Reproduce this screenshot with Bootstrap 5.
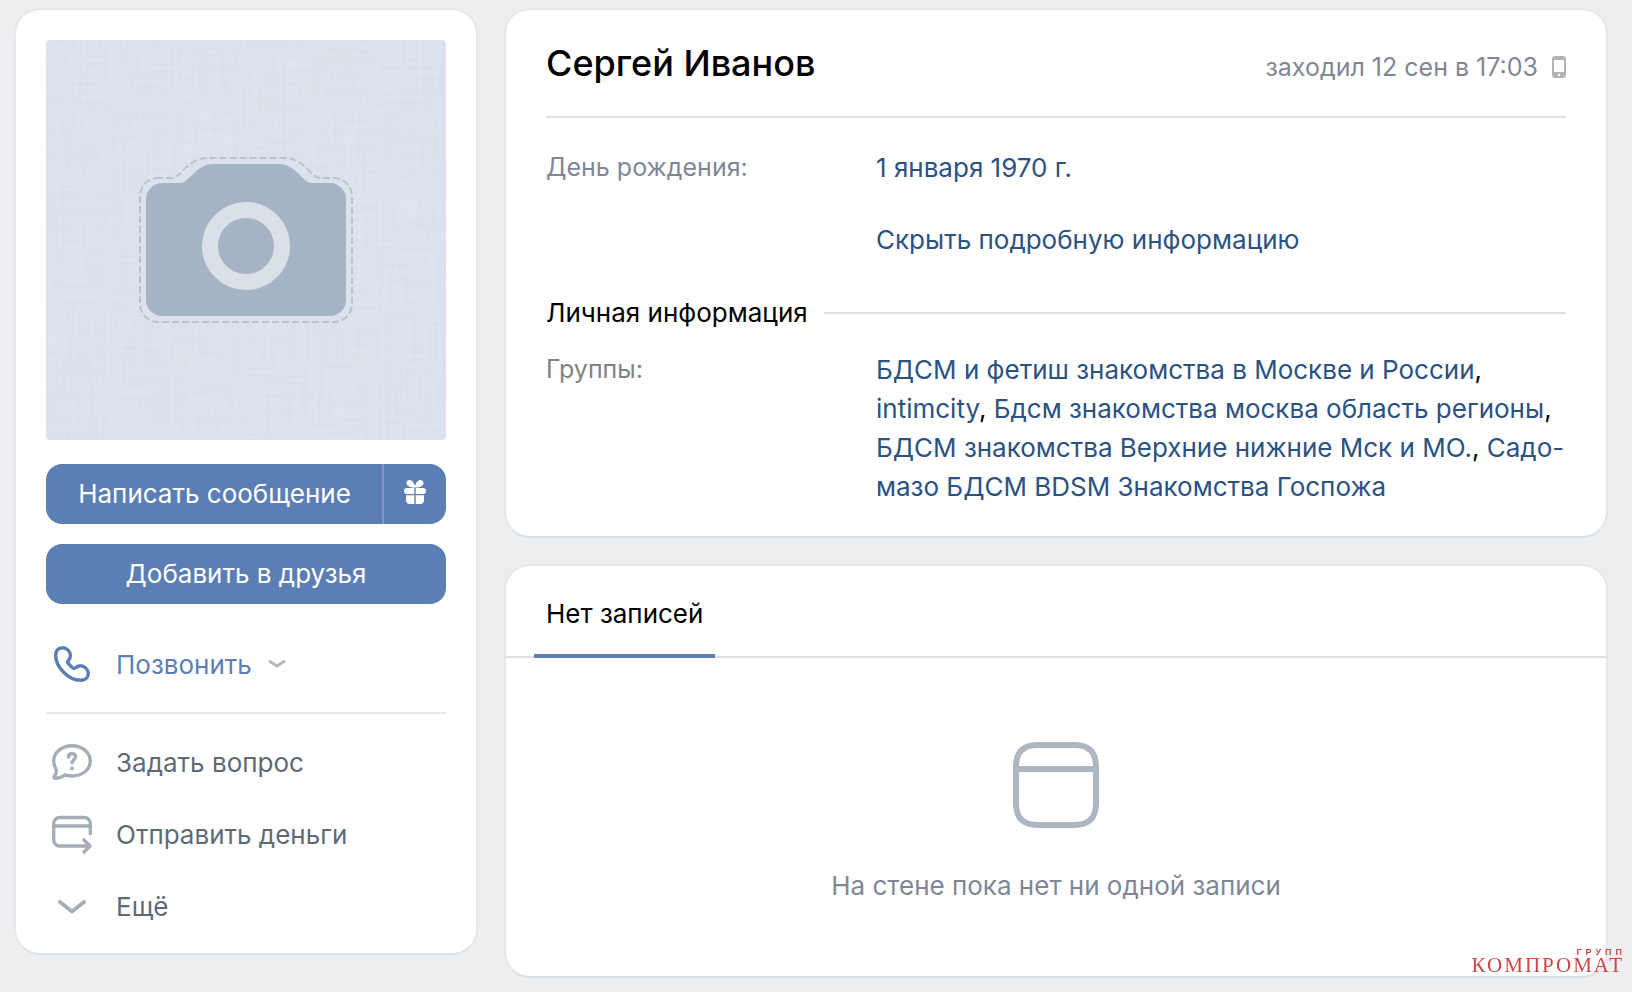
<!DOCTYPE html>
<html lang="ru">
<head>
<meta charset="utf-8">
<meta name="viewport" content="width=device-width, initial-scale=1">
<title>Сергей Иванов</title>
<link href="https://cdn.jsdelivr.net/npm/bootstrap@5.3.0/dist/css/bootstrap.min.css" rel="stylesheet">
<style>
  :root { --accent: #5b7fb4; --line: #dce1e6; --muted: #7f8796; --ink-link: #2c5282; }
  body { background: #edeef0; color: #000; font-family: Inter, "Liberation Sans", sans-serif; font-size: 26px; line-height: 39px; }
  a { color: var(--ink-link); text-decoration: none; }
  .page { padding: 8px 24px 12px 14px; gap: 26px; }
  .side { width: 464px; }
  .panel { border: 2px solid #e5e7eb; border-bottom-color: var(--line); border-radius: 26px; background: #fff; }
  .side .panel { padding: 30px 30px 11px; }
  .avatar { border-radius: 4px; display: block; width: 100%; height: auto; }
  .action { --bs-btn-color: #fff; --bs-btn-bg: var(--accent); --bs-btn-hover-color: #fff; --bs-btn-hover-bg: #5275a8; --bs-btn-border-width: 0px;
    --bs-btn-font-size: 26px; --bs-btn-line-height: 40px; --bs-btn-padding-y: 10px; --bs-btn-padding-x: 0px; --bs-btn-border-radius: 16px; }
  .btn-group > .gift { flex: 0 0 64px; border-left: 2px solid #7d99c3; }
  .friend { margin-top: 20px; }
  .menu-row { height: 72px; padding-left: 6px; gap: 24px; color: #5f6a77; }
  .menu-row svg { flex: none; color: #a6adb8; }
  .menu-call, .menu-row .glyph { color: var(--accent); }
  .menu-call { gap: 16px; }
  .menu-call .glyph { margin-right: 8px; }
  .rule { height: 2px; background: var(--line); }
  .side .rule { background: #e7e8ec; margin: 12px 0; }
  .info { padding: 0 40px 30px; }
  .head { height: 106px; }
  .name { font-size: 36px; line-height: 46px; font-weight: 500; }
  .soft { color: var(--muted); }
  .seen { font-size: 25px; gap: 14px; }
  .facts { margin: 30px 0 0; }
  .facts dt, .facts .blank { width: 330px; flex: none; font-size: 25px; font-weight: 400; }
  .more { margin-top: 33px; }
  .subhead { margin-top: 34px; }
  .subhead h2 { font-size: 26px; line-height: 39px; font-weight: 400; }
  .groups { margin-top: 18px; }
  .groups dt { color: #828282; }
  .tab { margin-left: 28px; margin-bottom: -2px; padding: 28px 12px 21px; border-bottom: 4px solid var(--accent); color: #000; }
  .tabs { border-bottom: 2px solid var(--line); }
  .empty { padding: 84px 0 71px; gap: 38px; }
  .brand { position: fixed; right: 10px; bottom: 17px; color: #cf4647; }
  .brand-top { font: 700 9px/8px "Liberation Sans", sans-serif; letter-spacing: 4px; margin-right: -4px; }
  .brand-name { font: 21px/19px "Liberation Serif", serif; letter-spacing: 2px; margin-right: -2px; }
</style>
</head>
<body>
<div class="page d-flex align-items-start">
  <aside class="side flex-shrink-0">
    <div class="panel">
      <svg class="avatar" viewBox="0 0 400 400" role="img" aria-label="Нет фотографии">
        <defs>
          <filter id="weft" x="0" y="0" width="100%" height="100%"><feTurbulence type="fractalNoise" baseFrequency="0.015 0.3" numOctaves="2" seed="4"/><feColorMatrix values="0 0 0 0 .62  0 0 0 0 .66  0 0 0 0 .72  2.4 0 0 0 -.9"/></filter>
          <filter id="warp" x="0" y="0" width="100%" height="100%"><feTurbulence type="fractalNoise" baseFrequency="0.3 0.015" numOctaves="2" seed="9"/><feColorMatrix values="0 0 0 0 .62  0 0 0 0 .66  0 0 0 0 .72  2.4 0 0 0 -.9"/></filter>
        </defs>
        <rect width="400" height="400" fill="#dee5ee"/>
        <rect width="400" height="400" filter="url(#weft)" opacity=".2"/>
        <rect width="400" height="400" filter="url(#warp)" opacity=".2"/>
        <path d="M110 138h16c9 0 15-20 36-20h76c21 0 27 20 36 20h14a18 18 0 0 1 18 18v108a18 18 0 0 1-18 18H112a18 18 0 0 1-18-18V156a18 18 0 0 1 18-18z" fill="#dbe2eb" stroke="#b9c3cf" stroke-width="2" stroke-dasharray="7 3"/>
        <path d="M116 143h18c10 0 15-19 34-19h64c19 0 24 19 34 19h18a16 16 0 0 1 16 16v101a16 16 0 0 1-16 16H116a16 16 0 0 1-16-16V159a16 16 0 0 1 16-16z" fill="#a5b3c4"/>
        <circle cx="200" cy="206" r="36" fill="none" stroke="#dae0e7" stroke-width="16"/>
      </svg>
      <div class="btn-group d-flex mt-4">
        <button type="button" class="btn action">Написать сообщение</button>
        <button type="button" class="btn action gift" aria-label="Отправить подарок">
          <svg width="24" height="26" viewBox="0 0 24 26" fill="#fff" class="d-block mx-auto mb-1"><path d="M11 8.500C6.500 8.500 3.500 6.500 3.500 4 3.500 2.200 4.800 1 6.600 1 9 1 11 3.500 11.700 6.500h.6C13 3.500 15 1 17.400 1c1.800 0 3.100 1.200 3.100 3 0 2.500-3 4.500-7.500 4.500z"/><path d="M4 9h7.300v6H4a3 3 0 0 1 0-6zm8.700 0H20a3 3 0 0 1 0 6h-7.300zM3 16.300h8.300V25H7a4 4 0 0 1-4-4zm9.700 0H21V21a4 4 0 0 1-4 4h-4.300z"/></svg>
        </button>
      </div>
      <button type="button" class="btn action friend w-100 d-block">Добавить в друзья</button>
      <nav class="pt-4">
        <a href="#" class="menu-row menu-call d-flex align-items-center">
          <svg class="glyph" width="40" height="40" viewBox="0 0 40 40" fill="none" stroke="currentColor" stroke-width="3.400"><path d="M10.500 3.700C6 3.700 3.700 7 3.700 11.500 3.700 23 16.500 36.300 28.500 36.300c4.500 0 7.800-2.800 7.800-6.800s-3.800-7.700-7.800-7.700c-2.500 0-3.500.8-4.800 2-1.200 1-2.200 1-3.400-.2l-3.800-3.800c-1.200-1.200-1-2.200 0-3.400 1.200-1.400 1.900-2.600 1.900-4.900 0-4-3.500-7.800-7.900-7.800z"/></svg>
          <span>Позвонить</span>
          <svg width="18" height="12" viewBox="0 0 18 12" fill="none" stroke="#b3b9c3" stroke-width="3" stroke-linecap="round" stroke-linejoin="round"><path d="M2 3.500 9 8l7-4.500"/></svg>
        </a>
        <div class="rule"></div>
        <a href="#" class="menu-row d-flex align-items-center">
          <svg width="40" height="40" viewBox="0 0 40 40" fill="none" stroke="currentColor" stroke-width="3.400" stroke-linecap="round" stroke-linejoin="round"><path d="M20 3.700c10 0 18.300 6.600 18.300 15.300S30 34 20 34c-2.600 0-4.800-.4-7-1.200-2.800 2-6 3.500-9.800 3.500-1.500 0-1.600-1-.7-2.100 1.500-1.900 2.200-3.700 1.700-6.600C2.700 25 1.700 22.300 1.700 19 1.700 10.300 10 3.700 20 3.700z"/><path d="M16.500 15c0-2.200 1.500-3.400 3.500-3.400s3.500 1.200 3.500 3.200c0 2.800-3.500 3-3.500 6"/><circle cx="20" cy="26.500" r="1.900" fill="currentColor" stroke="none"/></svg>
          <span>Задать вопрос</span>
        </a>
        <a href="#" class="menu-row d-flex align-items-center">
          <svg width="40" height="40" viewBox="0 0 40 40" fill="none" stroke="currentColor" stroke-width="3.400"><path d="M38.300 21V9.500a6 6 0 0 0-6-6H7.700a6 6 0 0 0-6 6V26a6 6 0 0 0 6 6H37M2 12h36"/><path d="m32 26 6 6-6 6" stroke-linecap="round" stroke-linejoin="round"/></svg>
          <span>Отправить деньги</span>
        </a>
        <a href="#" class="menu-row d-flex align-items-center">
          <svg width="40" height="40" viewBox="0 0 40 40" fill="none" stroke="currentColor" stroke-width="4" stroke-linecap="round" stroke-linejoin="round"><path d="M8 16 20 25.500 32 16"/></svg>
          <span>Ещё</span>
        </a>
      </nav>
    </div>
  </aside>

  <main class="flex-grow-1 d-flex flex-column" style="gap:26px">
    <section class="panel info">
      <header class="head d-flex align-items-center justify-content-between">
        <h1 class="name mb-0">Сергей Иванов</h1>
        <div class="soft seen d-flex align-items-center pt-2">
          <span>заходил 12 сен в 17:03</span>
          <svg width="14" height="22" viewBox="0 0 14 22"><path fill="#b3b4b6" fill-rule="evenodd" d="M3 0h8a3 3 0 0 1 3 3v16a3 3 0 0 1-3 3H3a3 3 0 0 1-3-3V3a3 3 0 0 1 3-3zM2 4v12h10V4zm4 14v2h2v-2z"/></svg>
        </div>
      </header>
      <div class="rule"></div>
      <dl class="facts d-flex">
        <dt class="soft">День рождения:</dt>
        <dd class="mb-0"><a href="#">1 января 1970 г.</a></dd>
      </dl>
      <div class="facts more d-flex"><div class="blank"></div><a href="#">Скрыть подробную информацию</a></div>
      <div class="subhead d-flex align-items-center gap-3">
        <h2 class="mb-0">Личная информация</h2>
        <div class="rule flex-grow-1"></div>
      </div>
      <dl class="facts groups d-flex">
        <dt>Группы:</dt>
        <dd class="mb-0"><a href="#">БДСМ и фетиш знакомства в Москве и России</a>, <a href="#">intimcity</a>, <a href="#">Бдсм знакомства москва область регионы</a>, <a href="#">БДСМ знакомства Верхние нижние Мск и МО.</a>, <a href="#">Садо-мазо БДСМ BDSM Знакомства Госпожа</a></dd>
      </dl>
    </section>

    <section class="panel">
      <div class="tabs d-flex"><a href="#" class="tab">Нет записей</a></div>
      <div class="empty d-flex flex-column align-items-center">
        <svg width="86" height="86" viewBox="0 0 86 86" fill="none" stroke="#aeb6c2" stroke-width="6"><path d="M25 3h36c15 0 22 7 22 22v36c0 15-7 22-22 22H25C10 83 3 76 3 61V25C3 10 10 3 25 3zM3 27h80"/></svg>
        <div class="soft">На стене пока нет ни одной записи</div>
      </div>
    </section>
  </main>
</div>
<div class="brand d-flex flex-column align-items-end"><span class="brand-top">ГРУПП</span><span class="brand-name">КОМПРОМАТ</span></div>
<script src="https://cdn.jsdelivr.net/npm/bootstrap@5.3.0/dist/js/bootstrap.bundle.min.js"></script>
</body>
</html>
